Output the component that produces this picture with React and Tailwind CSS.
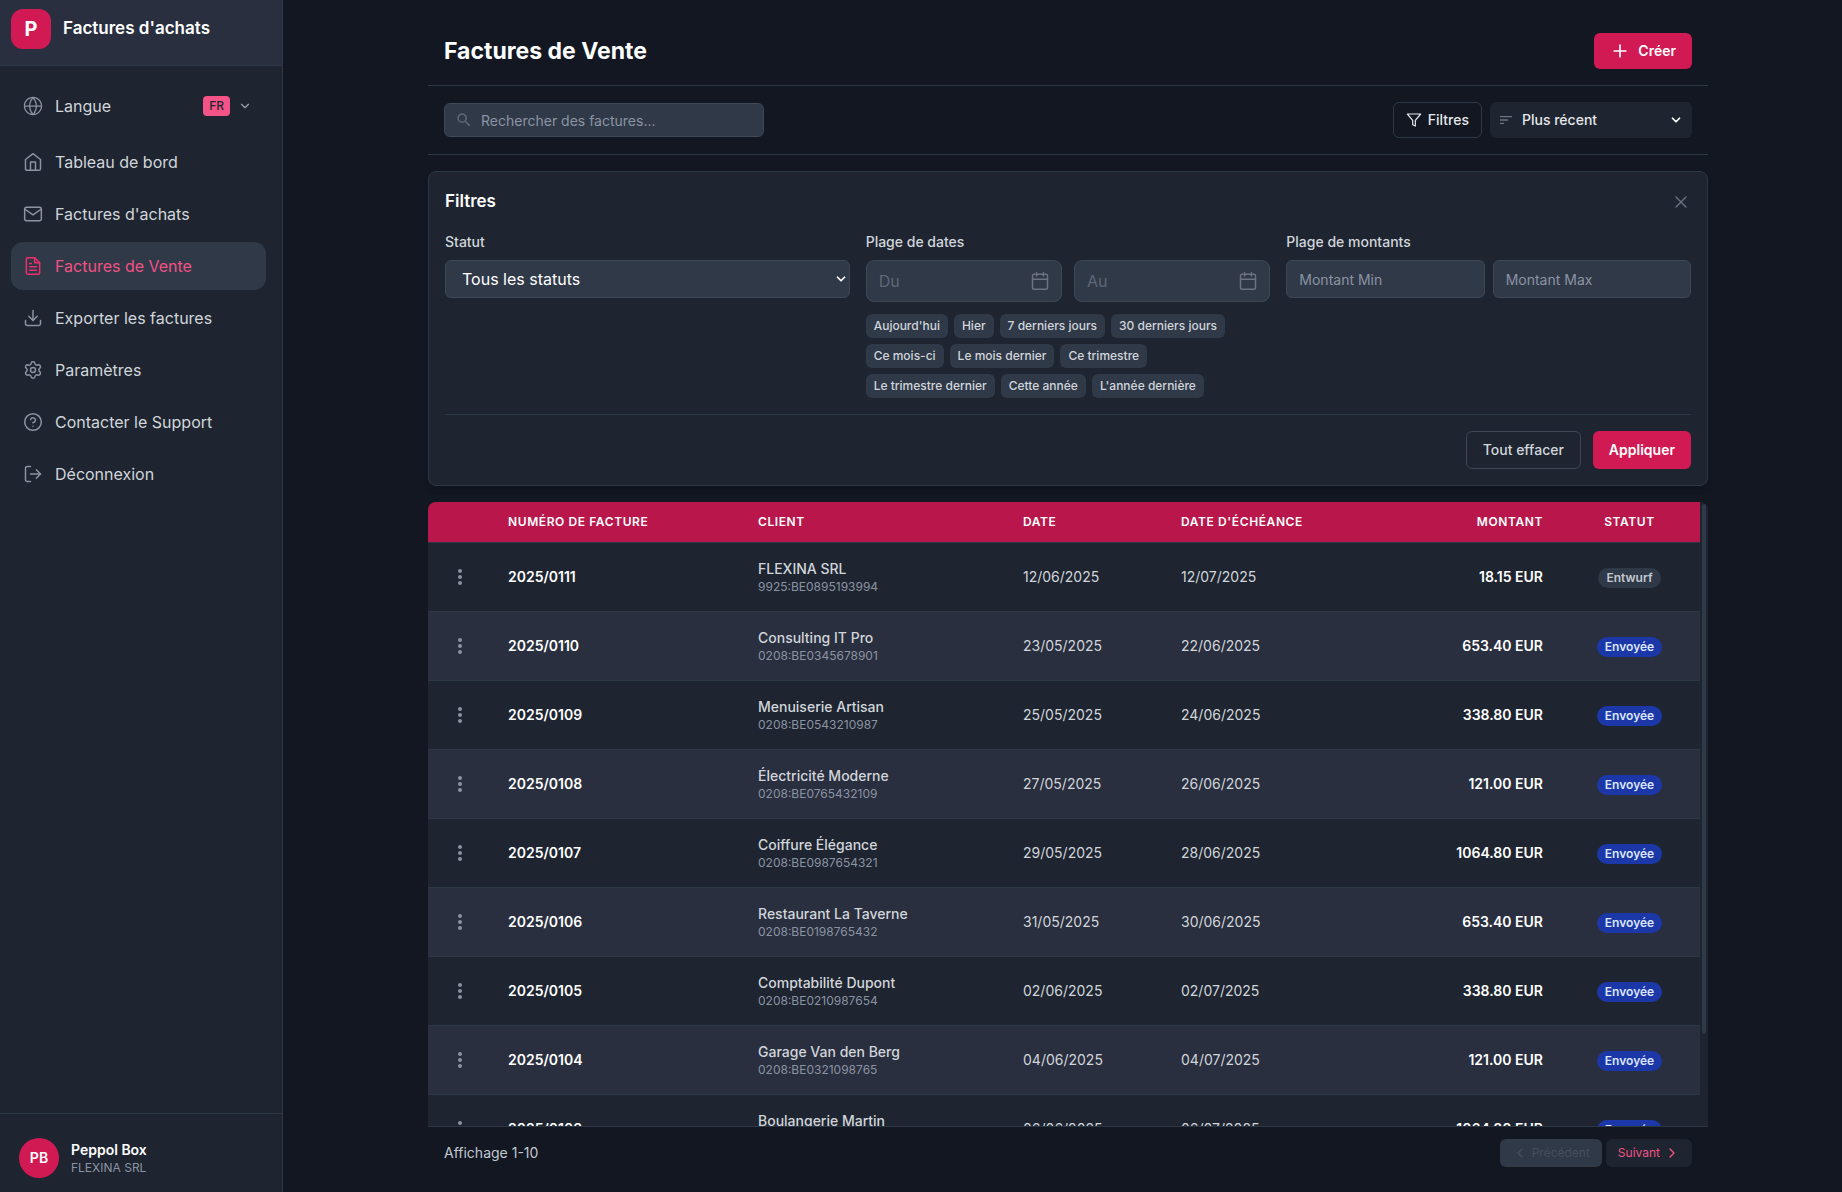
import { FiCalendar, FiChevronDown, FiChevronLeft, FiChevronRight, FiFileText, FiFilter, FiHelpCircle, FiHome, FiLogOut, FiMail } from 'react-icons/fi';
import { GoGlobe } from 'react-icons/go';
import { MdMoreVert, MdSearch, MdSort } from 'react-icons/md';
import { Download, Plus, Settings, X } from 'lucide-react';

const navItems = [
  { label: 'Tableau de bord', icon: FiHome },
  { label: "Factures d'achats", icon: FiMail },
  { label: 'Factures de Vente', icon: FiFileText, active: true },
  { label: 'Exporter les factures', icon: Download },
  { label: 'Paramètres', icon: Settings },
  { label: 'Contacter le Support', icon: FiHelpCircle },
  { label: 'Déconnexion', icon: FiLogOut },
];

const dateRanges = [
  ["Aujourd'hui", 'Hier', '7 derniers jours', '30 derniers jours'],
  ['Ce mois-ci', 'Le mois dernier', 'Ce trimestre'],
  ['Le trimestre dernier', 'Cette année', "L'année dernière"],
];

const invoices = [
  { number: '2025/0111', client: 'FLEXINA SRL', peppolId: '9925:BE0895193994', date: '12/06/2025', due: '12/07/2025', amount: '18.15 EUR', status: 'Entwurf' },
  { number: '2025/0110', client: 'Consulting IT Pro', peppolId: '0208:BE0345678901', date: '23/05/2025', due: '22/06/2025', amount: '653.40 EUR', status: 'Envoyée' },
  { number: '2025/0109', client: 'Menuiserie Artisan', peppolId: '0208:BE0543210987', date: '25/05/2025', due: '24/06/2025', amount: '338.80 EUR', status: 'Envoyée' },
  { number: '2025/0108', client: 'Électricité Moderne', peppolId: '0208:BE0765432109', date: '27/05/2025', due: '26/06/2025', amount: '121.00 EUR', status: 'Envoyée' },
  { number: '2025/0107', client: 'Coiffure Élégance', peppolId: '0208:BE0987654321', date: '29/05/2025', due: '28/06/2025', amount: '1064.80 EUR', status: 'Envoyée' },
  { number: '2025/0106', client: 'Restaurant La Taverne', peppolId: '0208:BE0198765432', date: '31/05/2025', due: '30/06/2025', amount: '653.40 EUR', status: 'Envoyée' },
  { number: '2025/0105', client: 'Comptabilité Dupont', peppolId: '0208:BE0210987654', date: '02/06/2025', due: '02/07/2025', amount: '338.80 EUR', status: 'Envoyée' },
  { number: '2025/0104', client: 'Garage Van den Berg', peppolId: '0208:BE0321098765', date: '04/06/2025', due: '04/07/2025', amount: '121.00 EUR', status: 'Envoyée' },
  { number: '2025/0103', client: 'Boulangerie Martin', peppolId: '0208:BE0432109876', date: '06/06/2025', due: '06/07/2025', amount: '1064.80 EUR', status: 'Envoyée' },
  { number: '2025/0102', client: 'Consulting IT Pro', peppolId: '0208:BE0345678901', date: '08/06/2025', due: '08/07/2025', amount: '653.40 EUR', status: 'Envoyée' },
];

function Sidebar() {
  return (
    <aside className="flex w-[283px] shrink-0 flex-col border-r border-[#2d3846] bg-[#1e2530]">
      <div className="flex items-center gap-3 border-b border-[#2d3846] bg-[#292f3e] px-[11px] pt-[9px] pb-4">
        <div className="flex size-10 items-center justify-center rounded-xl bg-[#d11a53] text-xl font-bold text-white">P</div>
        <span className="text-[17px] font-semibold text-white">Factures d'achats</span>
      </div>

      <nav className="flex flex-1 flex-col gap-1 px-[11px] pt-4 pr-4">
        <button type="button" className="mb-1 flex h-12 items-center gap-3 px-3 text-left text-[#d1d5db]">
          <GoGlobe size={20} className="text-[#8b93a3]" />
          <span className="flex-1">Langue</span>
          <span className="flex items-center gap-2 pr-0.5">
            <span className="rounded bg-[#f45388] px-1.5 py-0.5 text-xs font-medium text-[#1e2530]">FR</span>
            <FiChevronDown size={14} className="text-[#9ca3af]" />
          </span>
        </button>
        {navItems.map(({ label, icon: Icon, active }) => (
          <a
            key={label}
            href="#"
            aria-current={active ? 'page' : undefined}
            className={`flex h-12 items-center gap-3 rounded-xl px-3 ${
              active ? 'bg-[#303948] text-[#f05285]' : 'text-[#d1d5db]'
            }`}
          >
            <Icon size={20} strokeWidth={1.8} className={active ? 'text-[#ee2f6c]' : 'text-[#8b93a3]'} />
            {label}
          </a>
        ))}
      </nav>

      <div className="flex items-center gap-3 border-t border-[#2d3846] px-[19px] pt-6 pb-[14px]">
        <div className="flex size-10 items-center justify-center rounded-full bg-[#d11a53] text-sm font-semibold text-white">PB</div>
        <div>
          <div className="text-sm font-semibold text-white">Peppol Box</div>
          <div className="text-xs text-[#8b93a3]">FLEXINA SRL</div>
        </div>
      </div>
    </aside>
  );
}

function DateInput({ label }) {
  return (
    <div className="relative min-w-0 flex-1">
      <input
        type="text"
        aria-label={label}
        placeholder={label}
        className="h-[42px] w-full rounded-lg border border-[#3d4756] bg-[#303948] px-3 text-base text-white placeholder:text-[#5f6878]"
      />
      <FiCalendar size={20} strokeWidth={1.8} className="pointer-events-none absolute top-[11px] right-3 text-[#6b7280]" />
    </div>
  );
}

function FilterPanel() {
  const amountInput =
    'h-[38px] min-w-0 flex-1 rounded-md border border-[#3d4756] bg-[#303948] px-3 text-sm text-white placeholder:text-[#8b93a3]';

  return (
    <section className="mt-4 rounded-lg border border-[#2d3846] bg-[#1e2530] p-4 shadow-md">
      <div className="flex h-7 items-center justify-between">
        <h2 className="text-[17px] font-semibold text-white">Filtres</h2>
        <button type="button" aria-label="Fermer" className="text-[#6b7280]">
          <X size={20} strokeWidth={1.6} />
        </button>
      </div>

      <div className="mt-4 grid grid-cols-3 gap-4">
        <div>
          <label htmlFor="status" className="mb-2 block text-sm font-medium text-[#d1d5db]">Statut</label>
          <div className="relative">
            <select
              id="status"
              className="h-[38px] w-full appearance-none rounded-md border border-[#3d4756] bg-[#303948] px-4 text-base text-white"
            >
              <option>Tous les statuts</option>
            </select>
            <FiChevronDown size={14} strokeWidth={3} className="pointer-events-none absolute top-3 right-[2px] text-white" />
          </div>
        </div>

        <div>
          <div className="mb-2 text-sm font-medium text-[#d1d5db]">Plage de dates</div>
          <div className="flex gap-3">
            <DateInput label="Du" />
            <DateInput label="Au" />
          </div>
          <div className="mt-3 flex flex-col gap-1.5">
            {dateRanges.map((row) => (
              <div key={row[0]} className="flex gap-1.5">
                {row.map((range) => (
                  <button key={range} type="button" className="h-6 rounded-md bg-[#303948] px-2 text-xs font-medium text-[#d1d5db]">
                    {range}
                  </button>
                ))}
              </div>
            ))}
          </div>
        </div>

        <div>
          <div className="mb-2 text-sm font-medium text-[#d1d5db]">Plage de montants</div>
          <div className="flex gap-2">
            <input type="text" aria-label="Montant Min" placeholder="Montant Min" className={amountInput} />
            <input type="text" aria-label="Montant Max" placeholder="Montant Max" className={amountInput} />
          </div>
        </div>
      </div>

      <div className="mt-4 flex justify-end gap-3 border-t border-[#2d3846] pt-4">
        <button type="button" className="h-[38px] rounded-md border border-[#3d4756] px-4 text-sm font-medium text-[#d1d5db]">
          Tout effacer
        </button>
        <button type="button" className="h-[38px] rounded-md bg-[#d11a53] px-4 text-sm font-semibold text-white">
          Appliquer
        </button>
      </div>
    </section>
  );
}

function InvoiceTable() {
  return (
    <div className="relative mt-4 flex min-h-0 flex-1 flex-col overflow-hidden rounded-t-lg bg-[#1e2530] pr-2">
      <div className="min-h-0 flex-1 overflow-y-auto [scrollbar-width:none]">
        <table className="w-full table-fixed border-separate border-spacing-0 text-left text-sm">
          <colgroup>
            <col className="w-[64px]" />
            <col className="w-[250px]" />
            <col className="w-[265px]" />
            <col className="w-[158px]" />
            <col className="w-[190px]" />
            <col className="w-[204px]" />
            <col className="w-[141px]" />
          </colgroup>
          <thead className="sticky top-0 z-10">
            <tr className="h-[41px] bg-[#b9174c] text-xs tracking-wider text-white uppercase *:border-b *:border-[#2d3846] *:px-4 *:font-semibold">
              <th aria-label="Actions" />
              <th>Numéro de facture</th>
              <th>Client</th>
              <th>Date</th>
              <th>Date d'échéance</th>
              <th className="text-right">Montant</th>
              <th className="text-center">Statut</th>
            </tr>
          </thead>
          <tbody>
            {invoices.map((inv) => (
              <tr key={inv.number} className="h-[69px] text-[#d1d5db] *:border-b *:border-[#2d3846] *:px-4 even:bg-[#292f3e]">
                <td>
                  <button type="button" aria-label="Actions" className="mx-auto block w-6 text-[#8b93a3]">
                    <MdMoreVert size={24} />
                  </button>
                </td>
                <td className="font-semibold text-white">{inv.number}</td>
                <td>
                  <div className="font-medium">{inv.client}</div>
                  <div className="text-xs text-[#8b93a3]">{inv.peppolId}</div>
                </td>
                <td>{inv.date}</td>
                <td>{inv.due}</td>
                <td className="text-right font-semibold text-white">{inv.amount}</td>
                <td className="text-center">
                  <span
                    className={`inline-block rounded-full px-2 py-0.5 text-xs font-semibold ${
                      inv.status === 'Envoyée' ? 'bg-[#1c37a8] text-[#dbe6fe]' : 'bg-[#303948] text-[#c3c8d0]'
                    }`}
                  >
                    {inv.status}
                  </span>
                </td>
              </tr>
            ))}
          </tbody>
        </table>
      </div>
      {/* scroll thumb */}
      <div className="absolute top-0.5 right-0.5 h-[85%] w-1 rounded-full bg-[#303948]" />
    </div>
  );
}

export default function App() {
  return (
    <div className="flex h-screen bg-[#121722] font-['Inter',sans-serif]">
      <Sidebar />

      <main className="min-w-0 flex-1 pl-[11px]">
        <div className="mx-auto flex h-full max-w-7xl flex-col">
          <header className="flex items-center justify-between border-b border-[#2d3846] px-4 pt-[33px] pb-4">
            <h1 className="text-[23px] font-bold text-white">Factures de Vente</h1>
            <button type="button" className="flex h-9 items-center gap-2 rounded-md bg-[#d11a53] px-4 text-sm font-semibold text-white">
              <Plus size={20} />
              Créer
            </button>
          </header>

          <div className="flex items-center gap-2 border-b border-[#2d3846] p-4">
            <div className="relative mr-auto">
              <MdSearch size={18} className="pointer-events-none absolute top-2 left-[11px] text-[#5f6878]" />
              <input
                type="search"
                aria-label="Rechercher des factures"
                placeholder="Rechercher des factures..."
                className="h-[34px] w-80 rounded-md border border-[#3d4756] bg-[#303948] pr-3 pl-9 text-sm text-white placeholder:text-[#8b93a3]"
              />
            </div>
            <button type="button" className="flex h-9 items-center gap-1.5 rounded-md border border-[#2d3846] px-3 text-sm font-medium text-[#e5e7eb]">
              <FiFilter size={16} strokeWidth={1.8} />
              Filtres
            </button>
            <div className="relative">
              <MdSort size={16} className="pointer-events-none absolute top-2.5 left-2 text-[#6b7280]" />
              <select
                aria-label="Trier"
                className="h-9 w-[202px] appearance-none rounded-md bg-[#1e2530] px-8 text-sm font-medium text-[#e5e7eb]"
              >
                <option>Plus récent</option>
              </select>
              <FiChevronDown size={14} strokeWidth={3} className="pointer-events-none absolute top-[11px] right-[9px] text-white" />
            </div>
          </div>

          <FilterPanel />
          <InvoiceTable />

          <footer className="flex items-center justify-between border-t border-[#2d3846] px-4 pt-3 pb-[25px]">
            <span className="text-sm text-[#c3c8d0]">Affichage 1-10</span>
            <div className="flex gap-1">
              <button type="button" disabled className="flex h-7 items-center gap-1 rounded-md bg-[#303948] px-3 text-xs text-[#444e5d]">
                <FiChevronLeft size={16} />
                Précédent
              </button>
              <button type="button" className="flex h-7 items-center gap-1 rounded-md bg-[#1e2530] px-3 text-xs text-[#f05285]">
                Suivant
                <FiChevronRight size={16} />
              </button>
            </div>
          </footer>
        </div>
      </main>
    </div>
  );
}
